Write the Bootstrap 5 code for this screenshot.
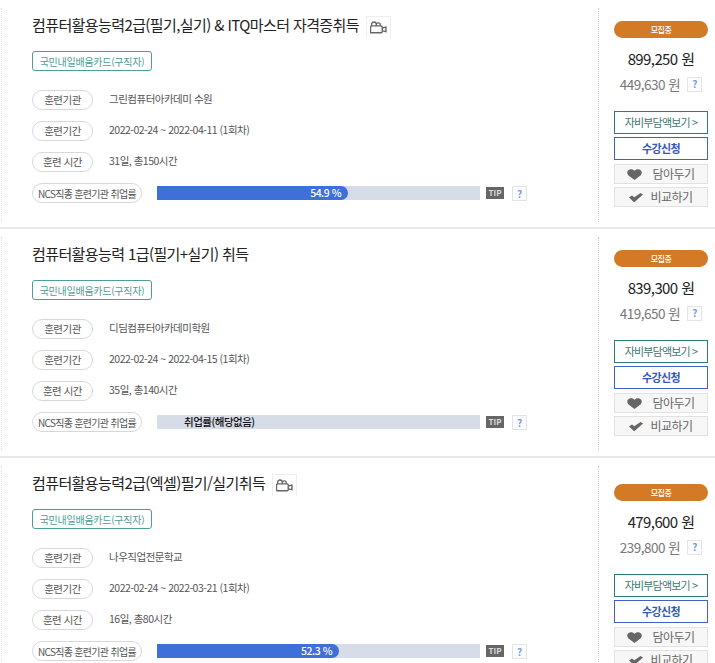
<!DOCTYPE html>
<html lang="ko">

<head>
  <meta charset="utf-8">
  <meta name="viewport" content="width=device-width, initial-scale=1.0">
  <title>훈련과정 목록</title>
  <link href="https://cdn.jsdelivr.net/npm/bootstrap@5.3.3/dist/css/bootstrap.min.css" rel="stylesheet">
  <style>
    html, body {
      height: 663px;
      overflow: hidden;
    }

    body {
      background: #fff;
      color: #555;
      font-family: "Noto Sans CJK KR", "Noto Sans", sans-serif;
      font-size: 10.5px;
      letter-spacing: -0.5px;
    }

    .course-item {
      height: 229px;
      padding-top: 8px;
      border-bottom: 2px solid #e8e8e8;
    }

    .course-inner {
      height: 214px;
    }

    .course-main {
      width: 598px;
      padding-left: 30px;
      border-left: 1px dotted #ddd;
      border-right: 1px dotted #ccc;
      margin-left: 1px;
    }

    .course-title {
      height: 36px;
      margin: 0;
      padding-bottom: 2px;
      color: #222;
      font-size: 15px;
      font-weight: 400;
      letter-spacing: -0.6px;
    }

    .video-box {
      width: 25px;
      height: 22px;
      margin-top: 4px;
      margin-left: 7px;
      border: 1px solid #eee;
      border-bottom: 0;
    }

    .card-tag {
      width: 120px;
      height: 20px;
      margin-top: 7px;
      margin-bottom: 19px;
      border: 1px solid #4f9d96;
      border-radius: 3px;
      color: #4f9d96;
      font-size: 10px;
      letter-spacing: -0.25px;
    }

    .info-row {
      height: 20px;
      margin-bottom: 11px;
    }

    .info-pill {
      width: 61px;
      height: 20px;
      margin-right: 16px;
      border: 1px solid #d8d8d8;
      border-radius: 10px;
      color: #555;
    }

    .info-pill.wide {
      width: 110px;
      margin-right: 15px;
      font-size: 10px;
      letter-spacing: -0.7px;
    }

    .info-value {
      padding-bottom: 2px;
    }

    .rate-track {
      width: 323px;
      height: 14px;
      background: #d6dce8;
      color: #111;
      font-weight: 500;
      line-height: 14px;
    }

    .rate-fill {
      background: #3f6fd8;
      border-radius: 0 7px 7px 0;
      color: #fff;
      font-weight: 500;
      padding-right: 7px;
    }

    .rate-none {
      padding-left: 27px;
    }

    .tip-mark {
      width: 18px;
      height: 12px;
      margin-left: 6px;
      background: #666;
      color: #ddd;
      font-size: 8px;
      font-weight: 700;
      letter-spacing: 0;
    }

    .help-mark {
      width: 15px;
      height: 15px;
      border: 1px solid #e4e4e4;
      background: #fbfcff;
      color: #7b9be0;
      font-size: 10px;
      font-weight: 700;
      letter-spacing: 0;
    }

    .rate-row .help-mark {
      margin-left: 8px;
    }

    .course-side {
      width: 94px;
      margin-left: 15px;
      padding-top: 13px;
    }

    .course-side.side-low {
      padding-top: 18px;
    }

    .state-badge {
      height: 17px;
      border-radius: 9px;
      background: #d27a26;
      color: #fff;
      font-size: 8px;
      font-weight: 500;
    }

    .price-main {
      margin-top: 11px;
      color: #222;
      font-size: 15px;
      line-height: 20px;
      letter-spacing: -0.6px;
    }

    .price-self {
      margin-top: 5px;
      margin-bottom: 17px;
      color: #777;
      font-size: 13.5px;
      line-height: 20px;
      letter-spacing: -0.5px;
    }

    .price-self .help-mark {
      margin-left: 7px;
    }

    .side-btn {
      width: 94px;
      height: 23px;
      padding: 0;
      border-radius: 0;
      font-size: 11px;
      letter-spacing: -0.6px;
    }

    .btn-self {
      margin-bottom: 3px;
      border: 1px solid #2f7c74;
      color: #3f7770;
      letter-spacing: -0.85px;
    }

    .btn-apply {
      margin-bottom: 4px;
      border: 1px solid #3f62c4;
      color: #3558b8;
      font-weight: 700;
    }

    .btn-gray {
      height: 20px;
      margin-bottom: 3px;
      border: 1px solid #e2e2e2;
      background: #f7f7f7;
      color: #666;
      font-size: 12px;
      letter-spacing: -0.5px;
    }

    .btn-gray .ico-heart {
      margin-right: 10px;
    }

    .btn-gray .ico-check {
      margin-right: 7px;
    }
  </style>
</head>

<body>
  <div id="lista"></div>

  <svg width="0" height="0" class="position-absolute">
    <symbol id="ico-video" viewBox="0 0 16 12">
      <path d="M1.500 4.500h9a1 1 0 0 1 1 1v4.500a1 1 0 0 1-1 1h-9a1 1 0 0 1-1-1V5.500a1 1 0 0 1 1-1zM1.500 4.500V3a2.200 2.200 0 0 1 4.400 0v1.500M6 4.500V3.500a1.800 1.800 0 0 1 3.600 0v1M11.500 6.500l3.500-.8v4.300l-3.500-.8" fill="none" stroke="#666" stroke-width="1.300" />
    </symbol>
    <symbol id="ico-heart" viewBox="0 0 15 11">
      <path d="M7.500 11 1.200 6.200C-.6 4.100.1.500 3.400.200 5.200 0 6.600.7 7.500 1.800 8.400.7 9.800 0 11.600.200c3.300.3 4 3.900 2.200 6z" fill="#666" />
    </symbol>
    <symbol id="ico-check" viewBox="0 0 14 9">
      <path d="M0 4.600 3 2.600 5.300 4.300 11.500 0 14 1.400 5.600 9H4.800z" fill="#666" />
    </symbol>
  </svg>

  <script src="https://cdn.jsdelivr.net/npm/bootstrap@5.3.3/dist/js/bootstrap.bundle.min.js"></script>
  <script>
    const cursos = [
      { titulo: "컴퓨터활용능력2급(필기,실기) & ITQ마스터 자격증취득", video: true, instituicao: "그린컴퓨터아카데미 수원", periodo: "2022-02-24 ~ 2022-04-11 (1회차)", horas: "31일, 총150시간", taxa: 54.9, preco: "899,250", proprio: "449,630" },
      { titulo: "컴퓨터활용능력 1급(필기+실기) 취득", video: false, instituicao: "디딤컴퓨터아카데미학원", periodo: "2022-02-24 ~ 2022-04-15 (1회차)", horas: "35일, 총140시간", taxa: null, preco: "839,300", proprio: "419,650" },
      { titulo: "컴퓨터활용능력2급(엑셀)필기/실기취득", video: true, instituicao: "나우직업전문학교", periodo: "2022-02-24 ~ 2022-03-21 (1회차)", horas: "16일, 총80시간", taxa: 52.3, preco: "479,600", proprio: "239,800", lateralBaixa: true }
    ];

    function linhaInfo(rotulo, valor) {
      return `<div class="info-row d-flex align-items-center">
        <span class="info-pill d-flex align-items-center justify-content-center">${rotulo}</span>
        <span class="info-value">${valor}</span>
      </div>`;
    }

    function barraTaxa(taxa) {
      if (taxa === null) {
        return `<div class="rate-track rate-none">취업률(해당없음)</div>`;
      }
      return `<div class="rate-track"><div class="rate-fill text-end" style="width: ${taxa * 3.48}px">${taxa} %</div></div>`;
    }

    document.getElementById("lista").innerHTML = cursos.map(c => `
      <div class="course-item">
        <div class="course-inner d-flex">
          <div class="course-main">
            <h2 class="course-title d-flex align-items-center">
              <span>${c.titulo}</span>
              ${c.video ? `<span class="video-box d-flex align-items-center justify-content-center"><svg width="17" height="13"><use href="#ico-video"></use></svg></span>` : ""}
            </h2>
            <div class="card-tag d-flex align-items-center justify-content-center">국민내일배움카드(구직자)</div>
            ${linhaInfo("훈련기관", c.instituicao)}
            ${linhaInfo("훈련기간", c.periodo)}
            ${linhaInfo("훈련 시간", c.horas)}
            <div class="info-row rate-row d-flex align-items-center">
              <span class="info-pill wide d-flex align-items-center justify-content-center">NCS직종 훈련기관 취업률</span>
              ${barraTaxa(c.taxa)}
              <span class="tip-mark d-flex align-items-center justify-content-center">TIP</span>
              <span class="help-mark d-flex align-items-center justify-content-center">?</span>
            </div>
          </div>
          <div class="course-side${c.lateralBaixa ? " side-low" : ""}">
            <div class="state-badge d-flex align-items-center justify-content-center">모집중</div>
            <div class="price-main text-center">${c.preco} 원</div>
            <div class="price-self d-flex align-items-center justify-content-center">${c.proprio} 원<span class="help-mark d-flex align-items-center justify-content-center">?</span></div>
            <button type="button" class="btn side-btn btn-self d-block">자비부담액보기 &gt;</button>
            <button type="button" class="btn side-btn btn-apply d-block">수강신청</button>
            <button type="button" class="btn side-btn btn-gray d-flex align-items-center justify-content-center"><svg class="ico-heart" width="15" height="11"><use href="#ico-heart"></use></svg>담아두기</button>
            <button type="button" class="btn side-btn btn-gray d-flex align-items-center justify-content-center"><svg class="ico-check" width="14" height="9"><use href="#ico-check"></use></svg>비교하기</button>
          </div>
        </div>
      </div>`).join("");
  </script>
</body>

</html>
